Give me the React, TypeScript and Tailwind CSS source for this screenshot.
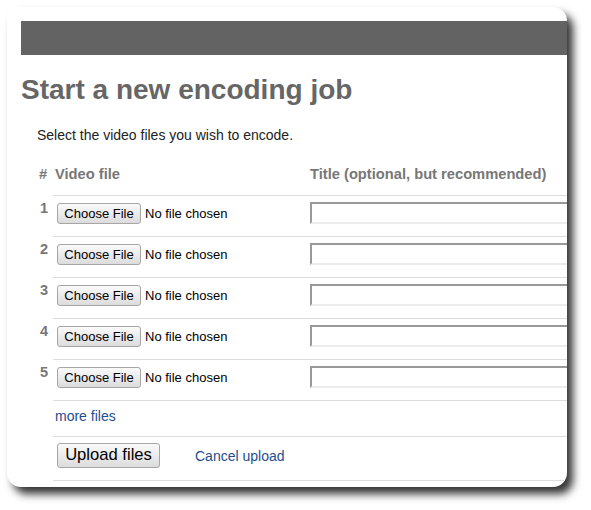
// Encoding job upload form, shown as a framed window with a drop shadow

const ROWS = [1, 2, 3, 4, 5];

const font = { fontFamily: '"Liberation Sans", Arial, sans-serif' };

function FileRow({ n }: { n: number }) {
  return (
    <div className="flex">
      <div className="w-[16px] shrink-0 pl-[3px] pt-[2px] text-[14.5px] font-bold leading-5 text-[#777]">{n}</div>
      <div className="flex h-[41px] flex-1 border-b border-[#dddddd]">
        <div className="flex w-[255px] shrink-0 items-center self-start pl-[4px] pt-[7px]">
          <button
            type="button"
            className="h-[21px] w-[84px] rounded-[3px] border border-[#a6a6a6] bg-gradient-to-b from-[#fafafa] to-[#dcdcdc] text-[13px] leading-none text-black"
          >
            Choose File
          </button>
          <span className="ml-[4px] text-[13px] leading-none text-black">No file chosen</span>
        </div>
        <div className="pl-[2px] pt-[6px]">
          <input
            type="text"
            className="block h-[22px] w-[320px] border-2 border-t-[#999] border-l-[#999] border-b-[#ececec] border-r-[#ececec] bg-white outline-none"
          />
        </div>
      </div>
    </div>
  );
}

export default function App() {
  return (
    <div className="min-h-[510px] w-[591px] bg-white p-[7px]" style={font}>
      <div className="h-[480px] w-[560px] overflow-hidden rounded-[14px] bg-white px-[14px] pt-[14px] shadow-[6px_7px_8px_rgba(0,0,0,0.8)]">
        <div className="w-[700px]">
          <div className="h-[34px] bg-[#636363]" />

          <h1 className="mt-[18px] text-[28px] font-bold leading-[34px] text-[#666]">Start a new encoding job</h1>

          <div className="ml-[16px]">
            <p className="mt-[18px] text-[14px] leading-5 text-[#222]">Select the video files you wish to encode.</p>

            <div className="mt-[19px]">
              {/* header */}
              <div className="flex text-[14.7px] font-bold leading-5 text-[#777]">
                <div className="w-[16px] shrink-0 pl-[2px]">#</div>
                <div className="flex h-[32px] flex-1 border-b border-[#dddddd]">
                  <div className="w-[255px] shrink-0 pl-[2px]">Video file</div>
                  <div className="pl-[2px]">Title (optional, but recommended)</div>
                </div>
              </div>

              {ROWS.map((n) => (
                <FileRow key={n} n={n} />
              ))}

              <div className="flex">
                <div className="w-[16px] shrink-0" />
                <div className="h-[36px] flex-1 border-b border-[#dddddd] pl-[2px] pt-[3px]">
                  <a href="#" className="text-[14px] leading-5 text-[#1d4e8f]">
                    more files
                  </a>
                </div>
              </div>

              <div className="flex">
                <div className="w-[16px] shrink-0" />
                <div className="h-[44px] flex-1 border-b border-[#dddddd] pl-[4px] pt-[6px]">
                  <div className="flex items-center">
                    <button
                      type="button"
                      className="h-[25px] w-[103px] rounded-[3px] border border-[#a6a6a6] bg-gradient-to-b from-[#fafafa] to-[#dcdcdc] text-[16.6px] leading-none text-black"
                    >
                      Upload files
                    </button>
                    <a href="#" className="ml-[35px] text-[14px] leading-5 text-[#1d4e8f]">
                      Cancel upload
                    </a>
                  </div>
                </div>
              </div>
            </div>
          </div>
        </div>
      </div>
    </div>
  );
}
